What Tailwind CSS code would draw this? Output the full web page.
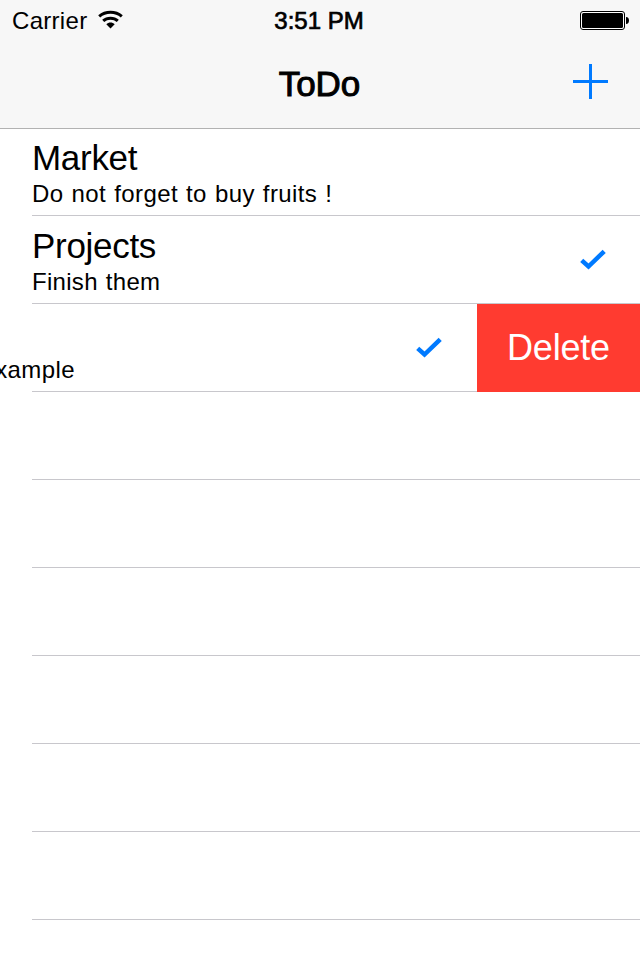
<!DOCTYPE html>
<html lang="en">
<head>
<meta charset="utf-8">
<title>ToDo</title>
<script src="https://cdn.jsdelivr.net/npm/@tailwindcss/browser@4"></script>
</head>
<body class="bg-white">
<div class="flex h-[960px] w-[640px] flex-col overflow-hidden bg-white font-['Liberation_Sans',Arial,sans-serif] text-black">
  <header class="relative z-10 -mb-px h-[129px] shrink-0 border-b border-[#b2b2b2] bg-[#f7f7f7]">
    <div class="grid h-10 grid-cols-3 items-center pl-3 pr-[11px]">
      <div class="flex items-center gap-[11px]">
        <span class="text-[24px] leading-[42px] tracking-[0.3px]">Carrier</span>
        <svg class="mb-[3px] h-[19px] w-[25px]" viewBox="0 0 25 19" fill="none" stroke="#000" stroke-width="3">
          <path d="M1.200 6.300C7.600 .8 17.400 .8 23.800 6.300"/>
          <path d="M5.200 10.900C9.200 7.200 15.800 7.200 19.800 10.900"/>
          <path d="M12.500 18.500L8.300 14.200C10.700 11.900 14.300 11.900 16.700 14.200Z" fill="#000" stroke="none"/>
        </svg>
      </div>
      <span class="pr-[3px] text-center text-[24px] leading-[42px] [-webkit-text-stroke:0.7px_#000]">3:51 PM</span>
      <svg class="h-[20px] w-[49px] justify-self-end" viewBox="0 0 49 20">
        <rect x=".5" y=".5" width="44" height="18" rx="2.500" fill="#fff" stroke="#000"/>
        <rect x="2" y="2" width="41" height="15" rx="1.500"/>
        <path d="M46 6C48.200 6.200 49 7.500 49 9.500S48.200 12.800 46 13Z"/>
      </svg>
    </div>
    <div class="grid h-[88px] grid-cols-3 items-center pr-8">
      <span></span>
      <h1 class="pl-[31px] text-center text-[35px] leading-[88px] [-webkit-text-stroke:1px_#000]">ToDo</h1>
      <svg class="mb-[5px] h-[35px] w-[35px] justify-self-end" viewBox="0 0 35 35" fill="#007aff"><path d="M16 0h3v16h16v3H19v16h-3V19H0v-3h16z"/></svg>
    </div>
  </header>
  <main class="flex flex-col">
    <div class="ml-8 flex h-[88px] items-center border-b border-[#c8c7cc]">
      <div class="whitespace-nowrap pt-1">
        <div class="text-[35px] leading-[40px] tracking-[-0.3px]">Market</div>
        <div class="text-[24px] leading-[32px] tracking-[0.4px] [word-spacing:1px]">Do not forget to buy fruits !</div>
      </div>
    </div>
    <div class="ml-8 flex h-[88px] items-center justify-between border-b border-[#c8c7cc] pr-[34px]">
      <div class="whitespace-nowrap pt-1">
        <div class="text-[35px] leading-[40px] tracking-[-0.3px]">Projects</div>
        <div class="text-[24px] leading-[32px] tracking-[0.3px] [word-spacing:1px]">Finish them</div>
      </div>
      <svg class="h-[21px] w-[26px]" viewBox="0 0 26 21" fill="none" stroke="#007aff" stroke-width="4.500"><path d="M1.700 11.300L8.500 17.500L24.200 2.300"/></svg>
    </div>
    <div class="flex h-[88px]">
      <div class="relative flex w-[477px] items-center justify-between pr-[35px] after:absolute after:bottom-0 after:left-8 after:right-0 after:h-px after:bg-[#c8c7cc]">
        <div class="flex w-[75px] justify-end overflow-hidden whitespace-nowrap pt-[43px]">
          <div class="text-[24px] leading-[32px] tracking-[0.4px]">Example</div>
        </div>
        <svg class="mb-px h-[21px] w-[26px]" viewBox="0 0 26 21" fill="none" stroke="#007aff" stroke-width="4.500"><path d="M1.700 11.300L8.500 17.500L24.200 2.300"/></svg>
      </div>
      <button class="flex-1 bg-[#ff3b30] text-[36px] leading-[88px] tracking-[-0.2px] text-white">Delete</button>
    </div>
    <div class="ml-8 h-[88px] border-b border-[#c8c7cc]"></div>
    <div class="ml-8 h-[88px] border-b border-[#c8c7cc]"></div>
    <div class="ml-8 h-[88px] border-b border-[#c8c7cc]"></div>
    <div class="ml-8 h-[88px] border-b border-[#c8c7cc]"></div>
    <div class="ml-8 h-[88px] border-b border-[#c8c7cc]"></div>
    <div class="ml-8 h-[88px] border-b border-[#c8c7cc]"></div>
  </main>
</div>
</body>
</html>
